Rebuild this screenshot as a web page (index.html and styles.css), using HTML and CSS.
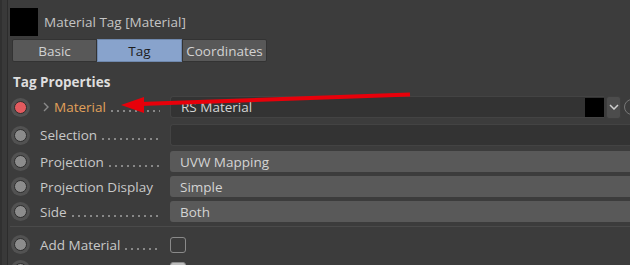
FILE: index.html
```html
<!DOCTYPE html>
<html lang="en">
<head>
    <meta charset="UTF-8">
    <title>Material Tag</title>
    <link rel="stylesheet" href="styles.css">
</head>
<body>
    <div class="side-strip"></div>

    <div class="panel">
        <div class="panel-header">
            <div class="tag-swatch"></div>
            <span class="panel-title">Material Tag [Material]</span>
        </div>

        <div class="tabs">
            <div class="tab">Basic</div>
            <div class="tab active">Tag</div>
            <div class="tab">Coordinates</div>
        </div>

        <div class="section-title">Tag Properties</div>

        <div class="row row-tall">
            <span class="radio on"></span>
            <span class="label orange">
                <svg class="chev" width="6" height="10" viewBox="0 0 6 10"><path d="M1 1 L5 5 L1 9" fill="none" stroke="#8a8a8a" stroke-width="1.4"/></svg>
                Material<span class="leader"></span>
            </span>
            <div class="field dark first-field">
                <span class="value">RS Material</span>
                <span class="black-swatch"></span>
            </div>
            <span class="drop-btn">
                <svg width="10" height="6" viewBox="0 0 10 6"><path d="M1 1 L5 5 L9 1" fill="none" stroke="#d0d0d0" stroke-width="1.5"/></svg>
            </span>
            <span class="round-btn"></span>
        </div>

        <div class="row row-tall">
            <span class="radio"></span>
            <span class="label">Selection<span class="leader"></span></span>
            <div class="field dark"></div>
        </div>

        <div class="row">
            <span class="radio"></span>
            <span class="label">Projection<span class="leader"></span></span>
            <div class="field"><span class="value">UVW Mapping</span></div>
        </div>

        <div class="row">
            <span class="radio"></span>
            <span class="label">Projection Display</span>
            <div class="field"><span class="value">Simple</span></div>
        </div>

        <div class="row">
            <span class="radio"></span>
            <span class="label">Side<span class="leader"></span></span>
            <div class="field"><span class="value">Both</span></div>
        </div>

        <div class="divider"></div>

        <div class="row">
            <span class="radio"></span>
            <span class="label">Add Material<span class="leader"></span></span>
            <span class="checkbox"></span>
        </div>

        <div class="row">
            <span class="radio"></span>
            <span class="label">Filter<span class="leader"></span></span>
            <span class="checkbox checked"></span>
        </div>
    </div>

    <!-- red annotation arrow drawn over the panel -->
    <svg class="arrow" width="630" height="265" viewBox="0 0 630 265">
        <line x1="410" y1="94.5" x2="140" y2="104" stroke="#e8000a" stroke-width="4"/>
        <polygon points="121,105 144,97 144,113" fill="#e8000a"/>
    </svg>
</body>
</html>
```

FILE: styles.css
```css
body {
    margin: 0;
    height: 265px;
    overflow: hidden;
    background-color: #3c3c3c;
    font-family: "Open Sans", "Noto Sans", sans-serif;
    font-size: 13.5px;
    color: #c8c8c8;
    display: flex;
}

.side-strip {
    width: 8px;
    flex-shrink: 0;
    background-color: #393939;
    border-left: 2px solid #303030;
    border-right: 1px solid #2c2c2c;
    box-sizing: border-box;
}

.panel {
    flex: 1;
    min-width: 0;
    display: flex;
    flex-direction: column;
}

.panel > * {
    flex-shrink: 0;
}

.panel-header {
    display: flex;
    align-items: center;
    padding: 8px 0 0 2px;
    height: 28px;
}

.tag-swatch {
    width: 28px;
    height: 28px;
    background-color: #000;
}

.panel-title {
    margin-left: 6px;
    color: #c4c4c4;
}

.tabs {
    display: flex;
    margin: 3px 0 0 4px;
    height: 23px;
}

.tab {
    width: 85px;
    box-sizing: border-box;
    display: flex;
    align-items: center;
    justify-content: center;
    background-color: #585858;
    border: 1px solid #333;
    color: #d2d2d2;
}

.tab:first-child {
    border-radius: 2px 0 0 2px;
}

.tab:last-child {
    border-radius: 0 2px 2px 0;
}

.tab.active {
    background-color: #88a3cc;
    border-color: #6f88ad;
    color: #1e1e1e;
}

.section-title {
    font-weight: bold;
    color: #dedede;
    margin: 10px 0 0 5px;
    height: 23px;
    line-height: 20px;
}

.row {
    display: flex;
    align-items: center;
    height: 21px;
    margin-bottom: 4px;
}

.row-tall {
    height: 22px;
    margin-top: 1px;
    margin-bottom: 5px;
}

.radio {
    width: 19px;
    height: 19px;
    margin-left: 3px;
    box-sizing: border-box;
    border-radius: 50%;
    background-color: #525252;
    display: flex;
    align-items: center;
    justify-content: center;
    flex-shrink: 0;
}

.radio::after {
    content: "";
    width: 11px;
    height: 11px;
    border-radius: 50%;
    background-color: #8c8c8c;
    border: 1.5px solid #2c2c2c;
}

.radio.on::after {
    background-color: #e35a5e;
}

.label {
    width: 120px;
    margin-left: 10px;
    display: flex;
    align-items: baseline;
    white-space: nowrap;
    flex-shrink: 0;
}

.label.orange {
    color: #e1a15a;
}

.chev {
    margin: 0 5px 0 3px;
    align-self: center;
}

.leader {
    flex: 1;
    height: 2px;
    margin-left: 3px;
    background-image: radial-gradient(circle, #8a8a8a 0.7px, transparent 1px);
    background-size: 6px 2px;
    background-repeat: repeat-x;
    background-position: left bottom;
}

.field {
    margin-left: 10px;
    flex: 1;
    min-width: 0;
    height: 21px;
    box-sizing: border-box;
    display: flex;
    align-items: center;
    padding-left: 10px;
    background-color: #595959;
    border-radius: 3px 0 0 3px;
    color: #d4d4d4;
    margin-right: -20px;
}

.field.dark {
    height: 22px;
    background-color: #333;
    border: 1px solid #434343;
    border-right: none;
}

.field.first-field {
    margin-right: 0;
}

.value {
    flex: 1;
}

.black-swatch {
    width: 19px;
    height: 19px;
    flex-shrink: 0;
    background-color: #000;
}

.drop-btn {
    width: 15px;
    height: 23px;
    margin-left: 2px;
    margin-right: 3px;
    box-sizing: border-box;
    border: 1px solid #3e3e3e;
    border-radius: 3px;
    background-color: #4c4c4c;
    display: flex;
    align-items: center;
    justify-content: center;
    flex-shrink: 0;
}

.round-btn {
    width: 16px;
    height: 16px;
    box-sizing: border-box;
    border-radius: 50%;
    border: 1px solid #777;
    flex-shrink: 0;
    margin-right: -10px;
}

.divider {
    height: 1px;
    background-color: #4a4a4a;
    margin: 0 0 7px 2px;
}

.checkbox {
    width: 16px;
    height: 16px;
    margin-left: 10px;
    box-sizing: border-box;
    border: 1px solid #8a8a8a;
    border-radius: 3px;
}

.checkbox.checked {
    background-color: #bcbcbc;
}

.arrow {
    position: absolute;
    left: 0;
    top: 0;
    pointer-events: none;
}
```
